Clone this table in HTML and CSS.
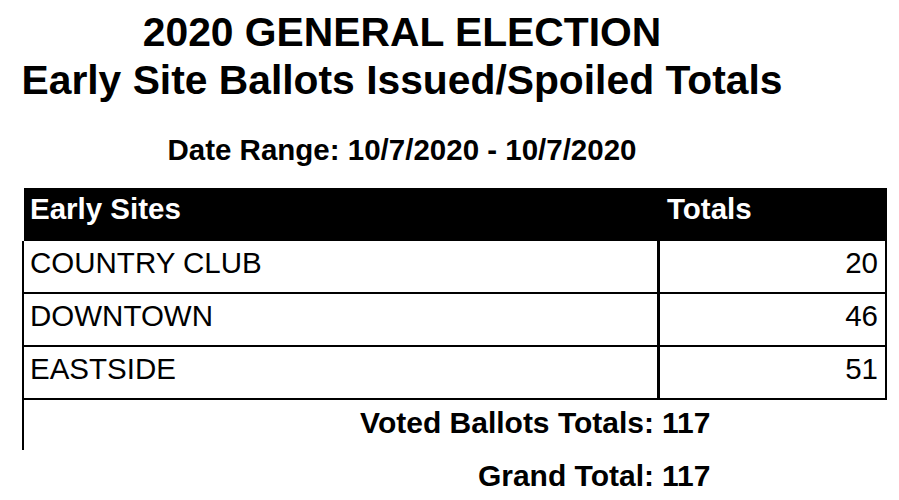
FILE: index.html
```html
<!DOCTYPE html>
<html lang="en">
<head>
  <meta charset="UTF-8">
  <meta name="viewport" content="width=device-width, initial-scale=1.0">
  <title>Early Site Ballots Issued/Spoiled Totals</title>
  <link rel="stylesheet" href="styles.css">
</head>
<body>

<div class="report-title">
  <h1>2020 GENERAL ELECTION<br>Early Site Ballots Issued/Spoiled Totals</h1>
  <h2>Date Range: 10/7/2020 - 10/7/2020</h2>
</div>

<div class="report">
  <div class="row head">
    <div class="site">Early Sites</div>
    <div class="total">Totals</div>
  </div>
  <div class="row">
    <div class="site">COUNTRY CLUB</div>
    <div class="total num">20</div>
  </div>
  <div class="row">
    <div class="site">DOWNTOWN</div>
    <div class="total num">46</div>
  </div>
  <div class="row">
    <div class="site">EASTSIDE</div>
    <div class="total num">51</div>
  </div>
  <div class="summary voted">
    <div class="label">Voted Ballots Totals:</div>
    <div class="value">117</div>
  </div>
  <div class="summary grand">
    <div class="label">Grand Total:</div>
    <div class="value">117</div>
  </div>
</div>

</body>
</html>
```

FILE: styles.css
```css
body {
  margin: 0;
  background-color: #fff;
  color: #000;
  font-family: 'Liberation Sans', Arial, sans-serif;
}

.report-title {
  width: 804px;
  text-align: center;
}

.report-title h1 {
  margin: 8px 0 0;
  font-size: 40.8px;
  line-height: 48px;
  font-weight: bold;
}

.report-title h2 {
  margin: 28px 0 0;
  font-size: 29.5px;
  line-height: 36px;
  font-weight: bold;
}

.report {
  margin: 20px 0 0 22px;
  width: 865px;
}

.row {
  display: grid;
  grid-template-columns: 633px 1fr;
  border-left: 2px solid #000;
  border-right: 2px solid #000;
  border-bottom: 2px solid #000;
  font-size: 29.5px;
  line-height: 36px;
}

.row .site {
  padding: 4px 6px 11px;
}

.row .total {
  border-left: 3px solid #000;
  padding: 4px 7px 11px;
}

.row .num {
  text-align: right;
}

.row.head {
  margin-left: 2px;
  border: none;
  background-color: #000;
  color: #fff;
  font-weight: bold;
}

.row.head .site,
.row.head .total {
  padding-top: 3px;
  padding-bottom: 14px;
}

.summary {
  display: grid;
  grid-template-columns: 633px 1fr;
  font-size: 30px;
  line-height: 36px;
  font-weight: bold;
}

.summary .label {
  text-align: right;
  padding-right: 3px;
}

.summary .value {
  padding-left: 5px;
}

.summary.voted {
  border-left: 2px solid #000;
  padding: 5px 0 9px;
}

.summary.grand {
  padding-left: 2px;
  padding-top: 8px;
}
```
